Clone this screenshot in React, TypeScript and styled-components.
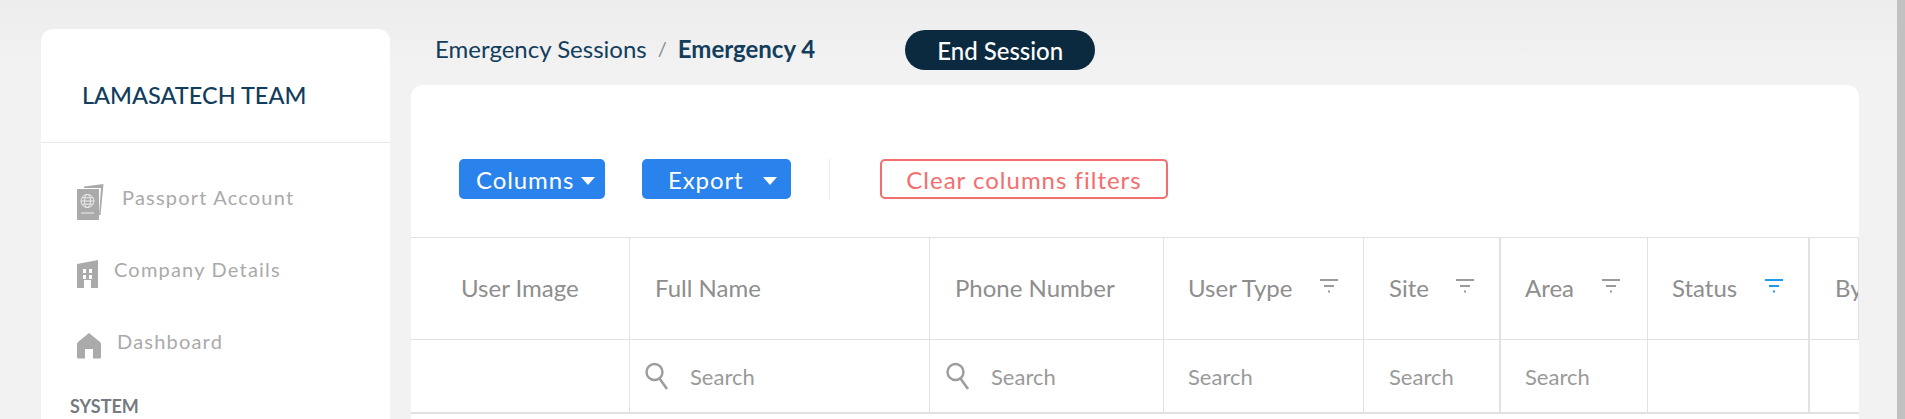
import React from 'react';
import styled, { createGlobalStyle } from 'styled-components';

const GlobalStyle = createGlobalStyle`
  html, body {
    margin: 0;
    padding: 0;
    height: 419px;
    overflow: hidden;
    background: #f2f2f2;
    font-family: Lato, "Liberation Sans", sans-serif;
  }
`;

const Page = styled.div`
  display: flex;
  width: 1905px;
  height: 419px;
  overflow: hidden;
  background: linear-gradient(180deg, #ededed 0, #f2f2f2 70px);
`;

const Sidebar = styled.aside`
  flex: none;
  width: 349px;
  height: 500px;
  margin: 29px 0 0 41px;
  background: #fff;
  border-radius: 12px;
`;

const Brand = styled.div`
  height: 114px;
  box-sizing: border-box;
  padding: 53px 0 0 41px;
  border-bottom: 1px solid #e8e8e8;
  color: #123d5c;
  font-size: 23.5px;
  line-height: 27px;
  font-weight: 500;
`;

const NavList = styled.nav`
  display: flex;
  flex-direction: column;
  padding: 23px 0 0 36px;
`;

const NavItem = styled.div<{ $gap: number }>`
  display: flex;
  align-items: center;
  gap: ${(p) => p.$gap}px;
  height: 72px;
  color: #aaaaaa;
  font-size: 20px;
  letter-spacing: 1.2px;
`;

const NavLabel = styled.span`
  position: relative;
  top: -5px;
`;

const SectionTitle = styled.div`
  margin: 13px 0 0 29px;
  color: #757a80;
  font-size: 18px;
  font-weight: 700;
`;

const Main = styled.main`
  flex: none;
  width: 1448px;
  margin-left: 21px;
`;

const TopBar = styled.div`
  display: flex;
  align-items: center;
  height: 85px;
  box-sizing: border-box;
  padding: 15px 0 0 24px;
`;

const Crumb = styled.span`
  margin-bottom: 4px;
  color: #123d5c;
  font-size: 24px;
`;

const CrumbSep = styled.span`
  margin: 0 11px 4px;
  color: #8a8a8a;
  font-size: 20px;
`;

const CrumbCurrent = styled.span`
  margin-bottom: 4px;
  color: #123d5c;
  font-size: 24px;
  font-weight: 700;
`;

const EndButton = styled.button`
  width: 190px;
  height: 40px;
  margin: 0 0 0 90px;
  padding: 0;
  border: 0;
  border-radius: 20px;
  background: #0b2a3f;
  color: #fff;
  font: 500 24px Lato, sans-serif;
`;

const Card = styled.section`
  height: 340px;
  background: #fff;
  border-radius: 12px 12px 0 0;
  overflow: hidden;
`;

const Toolbar = styled.div`
  display: flex;
  align-items: center;
  height: 152px;
  box-sizing: border-box;
  padding: 36px 0 0 48px;
`;

const BlueButton = styled.button<{ $width: number; $gap: number; $pad: number }>`
  display: flex;
  align-items: center;
  gap: ${(p) => p.$gap}px;
  width: ${(p) => p.$width}px;
  height: 40px;
  box-sizing: border-box;
  padding: 0 0 0 ${(p) => p.$pad}px;
  border: 0;
  border-radius: 5px;
  background: #2a82ec;
  color: #fff;
  font: 400 24px Lato, sans-serif;
  letter-spacing: 0.9px;
`;

const Caret = styled.i`
  width: 0;
  height: 0;
  margin-top: 3px;
  border-left: 7px solid transparent;
  border-right: 7px solid transparent;
  border-top: 8px solid #fff;
`;

const ExportWrap = styled.div`
  margin-left: 37px;
`;

const VDivider = styled.div`
  width: 1px;
  height: 40px;
  margin: 0 50px 0 38px;
  background: #ececec;
`;

const ClearButton = styled.button`
  width: 288px;
  height: 40px;
  padding: 0;
  border: 2px solid #f36e6e;
  border-radius: 5px;
  background: #fff;
  color: #f36e6e;
  font: 400 24px Lato, sans-serif;
  letter-spacing: 1px;
`;

const Table = styled.div`
  display: grid;
  grid-template-columns: 219px 300px 234px 200px 137px 147px 162px 49px;
  grid-template-rows: 102px 72px;
  border-top: 1px solid #e2e2e2;
  border-bottom: 2px solid #e2e2e2;
`;

const HeadCell = styled.div<{ $pad: number; $wide?: boolean }>`
  display: flex;
  align-items: center;
  box-sizing: border-box;
  padding: 0 0 2px ${(p) => p.$pad}px;
  border-bottom: 1px solid #e2e2e2;
  border-right: ${(p) => (p.$wide ? 2 : 1)}px solid #e2e2e2;
  color: #8e8e8e;
  font-size: 24px;
  white-space: nowrap;
  overflow: hidden;

  &:last-child {
    border-right: 0;
  }
`;

const FilterSlot = styled.span<{ $left: number }>`
  display: flex;
  margin-left: ${(p) => p.$left}px;
  margin-top: -4px;
`;

const SearchCell = styled.div<{ $pad: number; $wide?: boolean }>`
  display: flex;
  align-items: center;
  box-sizing: border-box;
  padding-left: ${(p) => p.$pad}px;
  border-right: ${(p) => (p.$wide ? 2 : 1)}px solid #e2e2e2;
  color: #9a9a9a;
  font-size: 22px;

  &:last-child {
    border-right: 0;
  }
`;

const SearchIcon = styled.svg`
  flex: none;
  width: 26px;
  height: 30px;
  margin-right: 20px;
`;

const Scrollbar = styled.div`
  flex: none;
  width: 8px;
  margin-left: 38px;
  background: #c1c1c1;
`;

const PassportIcon = () => (
  <svg width="28" height="36" viewBox="0 0 28 36">
    <path d="M7 2.5 26.5 0 23.5 31 22 31 24 4 7 4Z" fill="#aaa" />
    <path d="M1 5h20a1 1 0 0 1 1 1v29a1 1 0 0 1-1 1H1a1 1 0 0 1-1-1V6a1 1 0 0 1 1-1Z" fill="#aaa" />
    <g fill="none" stroke="#fff" strokeWidth="0.9" opacity="0.85">
      <circle cx="10.5" cy="17" r="6.5" />
      <ellipse cx="10.5" cy="17" rx="3" ry="6.5" />
      <path d="M4 17h13M5 13.8h11M5 20.2h11" />
    </g>
    <path d="M4 29h13" stroke="#fff" strokeWidth="1" opacity="0.85" />
  </svg>
);

const BuildingIcon = () => (
  <svg width="22" height="29" viewBox="0 0 22 29">
    <path
      fill="#aaa"
      fillRule="evenodd"
      d="M0 4 21 0V28H14V20H7V28H0ZM6 9v4h3V9ZM12 9v4h3V9ZM6 15v4h3v-4ZM12 15v4h3v-4Z"
    />
  </svg>
);

const HomeIcon = () => (
  <svg width="24" height="26" viewBox="0 0 24 26">
    <path
      fill="#aaa"
      d="M12 0 23 9c.7.6 1 1.300 1 2.200V24a1.600 1.600 0 0 1-1.600 1.600H16V16H8v9.600H1.600A1.600 1.600 0 0 1 0 24V11.200C0 10.300.3 9.600 1 9Z"
    />
  </svg>
);

const FilterIcon = ({ color }: { color: string }) => (
  <svg width="18" height="14" viewBox="0 0 18 14">
    <path d="M0 1h18M4 7h10M8 12.500h2" stroke={color} strokeWidth="1.800" fill="none" />
  </svg>
);

const Magnifier = () => (
  <SearchIcon viewBox="0 0 26 30">
    <circle cx="10.500" cy="11" r="8" fill="none" stroke="#9d9d9d" strokeWidth="2.400" />
    <path d="M15.500 17.500 23 28" stroke="#9d9d9d" strokeWidth="2.600" fill="none" />
  </SearchIcon>
);

interface Column {
  title: string;
  pad: number;
  searchPad: number;
  wide?: boolean;
  filter?: { left: number; color: string };
  search?: 'icon' | 'plain';
}

const columns: Column[] = [
  { title: 'User Image', pad: 50, searchPad: 0 },
  { title: 'Full Name', pad: 25, searchPad: 14, search: 'icon' },
  { title: 'Phone Number', pad: 25, searchPad: 15, search: 'icon' },
  { title: 'User Type', pad: 24, searchPad: 24, filter: { left: 28, color: '#9a9a9a' }, search: 'plain' },
  { title: 'Site', pad: 25, searchPad: 25, wide: true, filter: { left: 27, color: '#9a9a9a' }, search: 'plain' },
  { title: 'Area', pad: 24, searchPad: 24, filter: { left: 28, color: '#9a9a9a' }, search: 'plain' },
  { title: 'Status', pad: 24, searchPad: 24, wide: true, filter: { left: 28, color: '#1e9bf0' } },
  { title: 'By', pad: 25, searchPad: 25 },
];

export default function App() {
  return (
    <>
      <GlobalStyle />
      <Page>
        <Sidebar>
          <Brand>LAMASATECH TEAM</Brand>
          <NavList>
            <NavItem $gap={17}>
              <PassportIcon />
              <NavLabel>Passport Account</NavLabel>
            </NavItem>
            <NavItem $gap={15}>
              <BuildingIcon />
              <NavLabel>Company Details</NavLabel>
            </NavItem>
            <NavItem $gap={16}>
              <HomeIcon />
              <NavLabel>Dashboard</NavLabel>
            </NavItem>
          </NavList>
          <SectionTitle>SYSTEM</SectionTitle>
        </Sidebar>
        <Main>
          <TopBar>
            <Crumb>Emergency Sessions</Crumb>
            <CrumbSep>/</CrumbSep>
            <CrumbCurrent>Emergency 4</CrumbCurrent>
            <EndButton>End Session</EndButton>
          </TopBar>
          <Card>
            <Toolbar>
              <BlueButton $width={146} $gap={7} $pad={17}>
                Columns
                <Caret />
              </BlueButton>
              <ExportWrap>
                <BlueButton $width={149} $gap={19} $pad={26}>
                  Export
                  <Caret />
                </BlueButton>
              </ExportWrap>
              <VDivider />
              <ClearButton>Clear columns filters</ClearButton>
            </Toolbar>
            <Table>
              {columns.map((c) => (
                <HeadCell key={c.title} $pad={c.pad} $wide={c.wide}>
                  {c.title}
                  {c.filter && (
                    <FilterSlot $left={c.filter.left}>
                      <FilterIcon color={c.filter.color} />
                    </FilterSlot>
                  )}
                </HeadCell>
              ))}
              {columns.map((c) => (
                <SearchCell key={c.title} $pad={c.searchPad} $wide={c.wide}>
                  {c.search === 'icon' && <Magnifier />}
                  {c.search && 'Search'}
                </SearchCell>
              ))}
            </Table>
          </Card>
        </Main>
        <Scrollbar />
      </Page>
    </>
  );
}
